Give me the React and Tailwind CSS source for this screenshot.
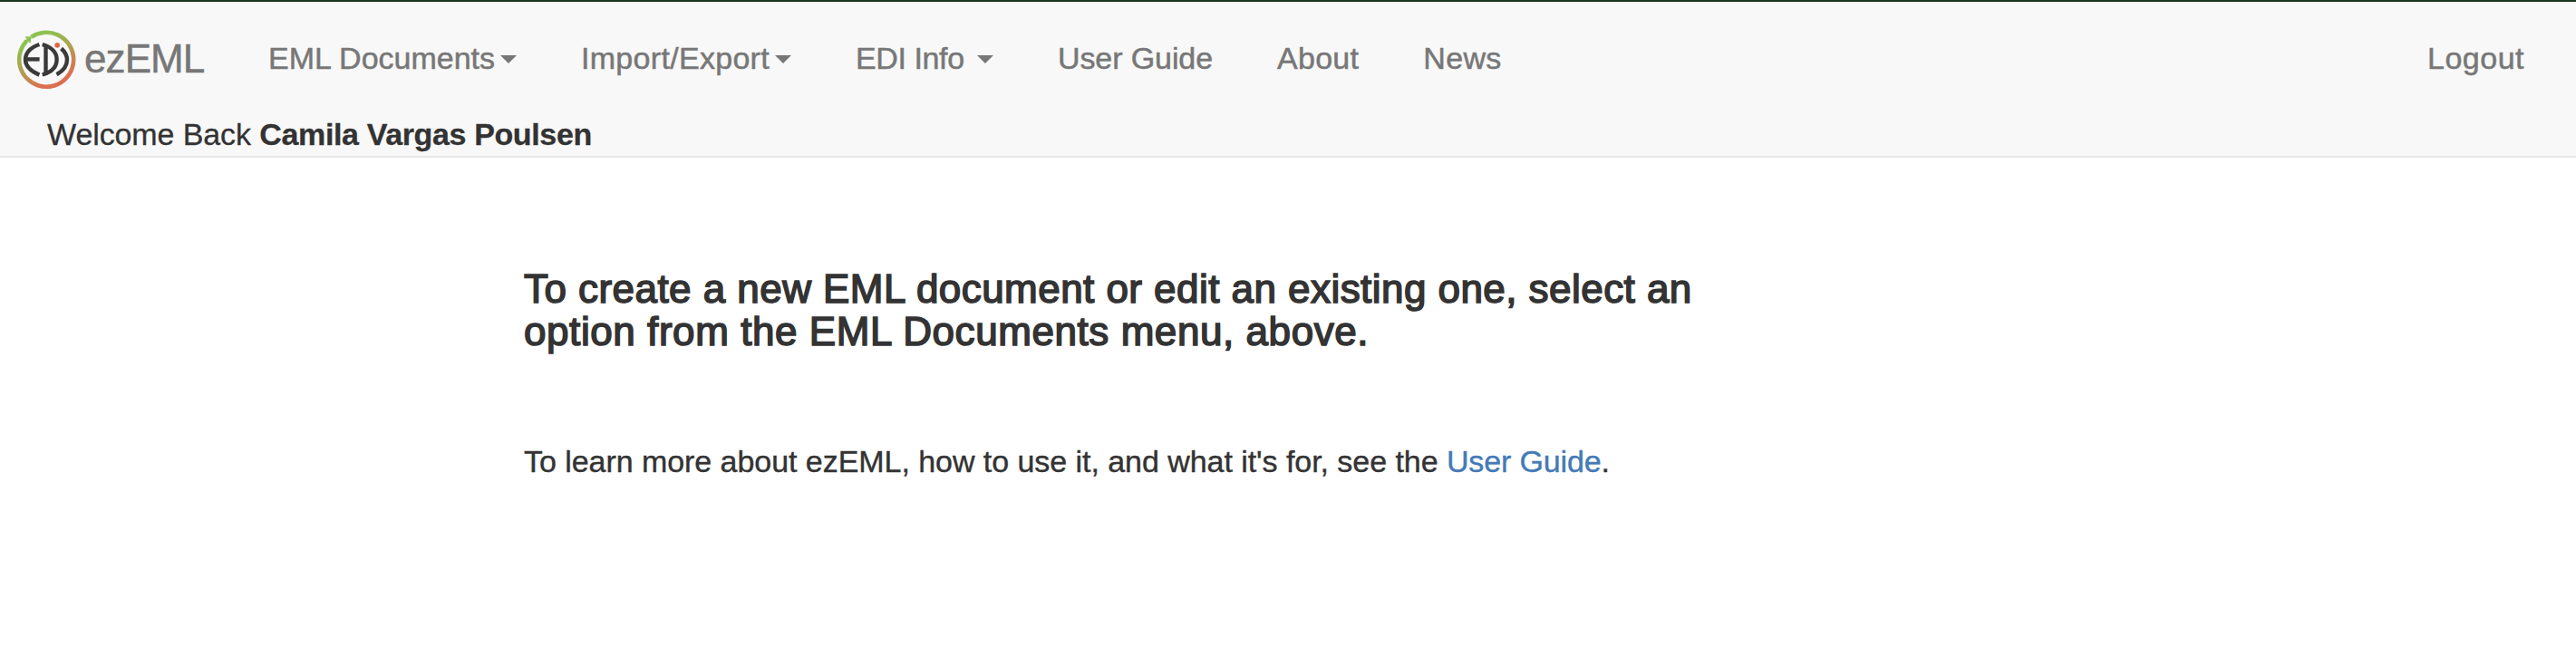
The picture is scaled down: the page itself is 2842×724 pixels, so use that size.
import React from "react";

function Caret({ className = "" }) {
  return (
    <svg className={"h-[9px] w-[18px] shrink-0 " + className} viewBox="0 0 18 9" fill="currentColor" stroke="none">
      <path d="M0 0H18L9 9Z" />
    </svg>
  );
}

function Logo() {
  return (
    <svg className="h-[66px] w-[66px] shrink-0" viewBox="0 0 66 66" fill="none">
      <defs>
        <linearGradient id="ring" x1="18" y1="5" x2="46" y2="61" gradientUnits="userSpaceOnUse">
          <stop offset="0.1" stopColor="#8dc251" />
          <stop offset="0.55" stopColor="#b59a50" />
          <stop offset="0.9" stopColor="#db6f50" />
        </linearGradient>
      </defs>
      <path d="M16.5 7.8A30 30 0 1 1 11.5 12" stroke="url(#ring)" strokeWidth="4.6" />
      <path d="M9.4 7.6L16.8 7.3L15.4 14.8L12.7 12.6L9.7 14.8L8 12.8L11.6 9.9Z" fill="#8dc251" />
      <g stroke="#3a3a3a" strokeWidth="4.4">
        <path d="M25.4 16C14.5 20 10 26.5 10 32.8S14.5 45 25.4 49.6" />
        <path d="M10 32.4H25.6" />
        <path d="M32.5 16V49.5" />
        <path d="M28.7 16.2C39.5 19 44.6 25.5 44.6 32.8S39.5 46.5 28.7 49.5" />
        <path d="M49.6 20.5C54.4 24.8 56 28.7 56 32.8C56 38.5 52.5 45 44.5 49.2" />
      </g>
      <circle cx="45.2" cy="16.8" r="2.9" fill="#e2674a" />
    </svg>
  );
}

export default function App() {
  return (
    <div className="h-[724px] w-[2842px] overflow-hidden bg-white font-['Liberation_Sans',Arial,sans-serif] text-[34px] leading-[48px] text-[#333]">
      <header className="flex h-[174px] flex-col border-t-2 border-b-2 border-t-[#18371c] border-b-[#e7e7e7] bg-[#f8f8f8]">
        <nav className="flex h-[126px] items-start text-[#777] [-webkit-text-stroke:0.5px_#777]">
          <a className="flex w-[296px] shrink-0 items-start pt-[31px] pl-[18px]">
            <Logo />
            <span className="ml-[9px] pt-[7px] text-[44px] leading-[50px] tracking-[-0.9px]">ezEML</span>
          </a>
          <div className="flex flex-1 items-start pt-[38px] whitespace-nowrap">
            <a className="mr-[71px] flex w-[274px] items-center justify-between">EML Documents<Caret className="mt-[2px]" /></a>
            <a className="mr-[71px] flex w-[232px] items-center justify-between tracking-[0.3px]">Import/Export<Caret className="mt-[2px]" /></a>
            <a className="mr-[71px] flex w-[152px] items-center justify-between tracking-[-0.4px]">EDI Info<Caret className="mt-[2px]" /></a>
            <a className="mr-[71px] tracking-[-0.1px]">User Guide</a>
            <a className="mr-[71px] tracking-[0.3px]">About</a>
            <a className="tracking-[0.3px]">News</a>
            <a className="mr-[57px] ml-auto tracking-[0.5px]">Logout</a>
          </div>
        </nav>
        <div className="-mt-[4px] pl-[52px] [-webkit-text-stroke:0.3px_#333]">
          <span className="tracking-[-0.1px]">Welcome Back </span>
          <b className="tracking-[-0.36px]">Camila Vargas Poulsen</b>
        </div>
      </header>
      <main className="pt-[121px] pl-[578px]">
        <h3 className="text-[44px] leading-[47px] [-webkit-text-stroke:1.6px_#333]">
          <span className="tracking-[0.45px]">To create a new EML document or edit an existing one, select an</span>
          <br />
          <span className="tracking-[0.57px]">option from the EML Documents menu, above.</span>
        </h3>
        <p className="mt-[96px] tracking-[-0.05px] [-webkit-text-stroke:0.4px]">
          To learn more about ezEML, how to use it, and what it's for, see the{" "}
          <a className="tracking-[-0.15px] text-[#447ab7]">User Guide</a>.
        </p>
      </main>
    </div>
  );
}
